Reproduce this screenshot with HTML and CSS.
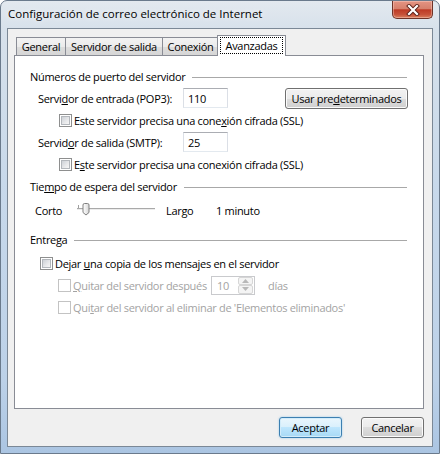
FILE: index.html
```html
<!DOCTYPE html>
<html lang="es">
<head>
<meta charset="utf-8">
<title>Configuración de correo electrónico de Internet</title>
<link rel="stylesheet" href="styles.css">
</head>
<body>
<div class="window">
  <div class="titlebar">
    <span class="title">Configuración de correo electrónico de Internet</span>
    <div class="close">
      <svg width="18" height="12" viewBox="0 0 18 12">
        <path d="M5 2 L13 10 M13 2 L5 10" stroke="#5a1f18" stroke-width="4" stroke-linecap="square"/>
        <path d="M5 2 L13 10 M13 2 L5 10" stroke="#ffffff" stroke-width="2.2" stroke-linecap="square"/>
      </svg>
    </div>
  </div>
  <div class="client">
    <div class="tabs">
      <div class="tab t1">General</div>
      <div class="tab t2">Servidor de salida</div>
      <div class="tab t3">Conexión</div>
      <div class="tab active"><span class="focus">Avanzadas</span></div>
    </div>
    <div class="panel">
      <div class="group-head"><span>Números de puerto del servidor</span><i class="rule"></i></div>
      <div class="row field-row">
        <span class="field-label">Servi<u>d</u>or de entrada (POP3):</span>
        <span class="textbox">110</span>
        <span class="btn wide">Usar pre<u>d</u>eterminados</span>
      </div>
      <div class="row check-row ssl">
        <span class="cb"></span><span>Este servidor precisa una cone<u>x</u>ión cifrada (SSL)</span>
      </div>
      <div class="row field-row">
        <span class="field-label">Servid<u>o</u>r de salida (SMTP):</span>
        <span class="textbox">25</span>
      </div>
      <div class="row check-row ssl">
        <span class="cb"></span><span>E<u>s</u>te servidor precisa una conexión cifrada (SSL)</span>
      </div>

      <div class="group-head g2"><span>Tie<u>m</u>po de espera del servidor</span><i class="rule"></i></div>
      <div class="row slider-row">
        <span class="s-short">Corto</span>
        <svg class="slider" width="80" height="22" viewBox="0 0 80 22">
          <defs>
            <linearGradient id="th" x1="0" y1="0" x2="1" y2="0">
              <stop offset="0" stop-color="#ffffff"/>
              <stop offset="1" stop-color="#d6d6d6"/>
            </linearGradient>
          </defs>
          <rect x="0" y="9" width="78" height="1" fill="#a9a9a9"/>
          <rect x="0" y="10" width="78" height="1" fill="#ececec"/>
          <rect x="1" y="6" width="1" height="3" fill="#a0a0a0"/>
          <path d="M7.5 4.5 h3 q1.5 0 1.5 1.5 v7.5 l-3 2.5 l-3 -2.5 v-7.5 q0 -1.5 1.5 -1.5 z" fill="url(#th)" stroke="#7f7f7f" stroke-width="1"/>
        </svg>
        <span class="s-long">Largo</span>
        <span class="s-val">1 minuto</span>
      </div>

      <div class="group-head g3"><span>Entrega</span><i class="rule"></i></div>
      <div class="row check-row keep">
        <span class="cb"></span><span>Dejar <u>u</u>na copia de los mensajes en el servidor</span>
      </div>
      <div class="row check-row sub disabled">
        <span class="cb"></span><span class="sub-label"><u>Q</u>uitar del servidor después</span>
        <span class="spin">
          <span class="spin-val">10</span>
          <span class="spin-btns">
            <span class="spin-b"><svg width="7" height="4" viewBox="0 0 7 4"><path d="M3.5 0 L7 4 L0 4 Z" fill="#b8b8b8"/></svg></span>
            <span class="spin-b"><svg width="7" height="4" viewBox="0 0 7 4"><path d="M0 0 L7 0 L3.5 4 Z" fill="#b8b8b8"/></svg></span>
          </span>
        </span>
        <span class="days">días</span>
      </div>
      <div class="row check-row sub disabled">
        <span class="cb"></span><span>Qui<u>t</u>ar del servidor al eliminar de 'Elementos eliminados'</span>
      </div>
    </div>
    <div class="buttons">
      <span class="btn default">Aceptar</span>
      <span class="btn">Cancelar</span>
    </div>
  </div>
</div>
</body>
</html>
```
FILE: styles.css
```css
html, body {
  margin: 0;
  padding: 0;
}
body {
  width: 440px;
  height: 454px;
  overflow: hidden;
  font-family: "Open Sans", "Liberation Sans", sans-serif;
  font-size: 11px;
  letter-spacing: -0.3px;
  color: #000;
  background: #ffffff;
  white-space: nowrap;
}
u {
  text-decoration: underline;
  text-underline-offset: 1px;
}
.window {
  width: 440px;
  height: 454px;
  box-sizing: border-box;
  border: 1px solid #6a7a8c;
  border-radius: 7px 7px 0 0;
  background: linear-gradient(180deg, #e3e9ef 0px, #d7e1eb 28px, #c8d9eb 180px, #bcd1e8 380px, #abc5e2 100%);
  padding: 0 6px 6px 6px;
  display: flex;
  flex-direction: column;
}
.titlebar {
  height: 27px;
  display: flex;
  align-items: flex-start;
  flex: none;
}
.title {
  margin-top: 5px;
  padding-left: 1px;
  line-height: 16px;
  font-size: 11.5px;
  letter-spacing: 0;
  text-shadow: 0 0 6px rgba(255,255,255,0.9);
}
.close {
  margin-left: auto;
  width: 41px;
  height: 18px;
  box-sizing: border-box;
  border: 1px solid #6e3328;
  border-top: none;
  border-radius: 0 0 5px 5px;
  background: linear-gradient(180deg, #e49483 0%, #d6806c 45%, #bd3a25 52%, #c7533a 80%, #d9805f 100%);
  box-shadow: inset 0 0 0 1px rgba(255,220,210,0.4);
  display: flex;
  align-items: center;
  justify-content: center;
}
.client {
  flex: 1;
  border: 1px solid #7b8896;
  background: #f0f0f0;
  padding: 6px 8px 0 6px;
  display: flex;
  flex-direction: column;
}
.tabs {
  height: 20px;
  display: flex;
  align-items: flex-end;
  padding-left: 2px;
  flex: none;
}
.tab {
  height: 18px;
  box-sizing: border-box;
  border: 1px solid #898c95;
  border-bottom: none;
  background: linear-gradient(180deg, #f3f3f3 0%, #ebebeb 50%, #dddddd 51%, #d6d6d6 100%);
  display: flex;
  align-items: center;
  justify-content: center;
  line-height: 14px;
  padding-top: 1px;
  position: relative;
}
.t1 { width: 50px; }
.t2 { width: 98px; margin-left: -1px; }
.t3 { width: 57px; margin-left: -1px; }
.tab.active {
  width: 69px;
  height: 21px;
  margin-left: -2px;
  margin-bottom: -1px;
  background: #ffffff;
  z-index: 2;
  align-items: flex-start;
  padding-top: 1px;
}
.focus {
  border: 1px dotted #000;
  padding: 0 5px;
  line-height: 15px;
}
.panel {
  height: 354px;
  box-sizing: border-box;
  flex: none;
  background: #ffffff;
  border: 1px solid #898c95;
  padding-top: 13px;
}
.group-head {
  height: 16px;
  display: flex;
  align-items: center;
  padding-left: 15px;
  padding-right: 16px;
  line-height: 16px;
}
.group-head .rule {
  flex: 1;
  height: 1px;
  background: #a8a8a8;
  margin-left: 7px;
}
.g2 { margin-top: 4px; }
.g3 { margin-top: 11px; }
.row {
  height: 22px;
  display: flex;
  align-items: center;
}
.field-row {
  padding-left: 23px;
  padding-right: 15px;
}
.group-head + .field-row { margin-top: 2px; }
.field-label {
  width: 145px;
  flex: none;
}
.textbox {
  width: 45px;
  height: 20px;
  box-sizing: border-box;
  border: 1px solid #abadb3;
  border-left-color: #dbdfe6;
  border-right-color: #dbdfe6;
  border-bottom-color: #e3e9ef;
  background: #fff;
  padding-left: 4px;
  display: flex;
  align-items: center;
}
.btn {
  height: 21px;
  box-sizing: border-box;
  border: 1px solid #707070;
  border-radius: 3px;
  background: linear-gradient(180deg, #f2f2f2 0%, #ebebeb 50%, #dddddd 50%, #cfcfcf 100%);
  box-shadow: inset 0 0 0 1px #fbfbfb;
  display: flex;
  align-items: center;
  justify-content: center;
  width: 63px;
}
.btn.wide {
  margin-left: auto;
  width: 123px;
}
.btn.default {
  border-color: #3c7fb1;
  background: linear-gradient(180deg, #eaf6fd 0%, #d9f0fc 50%, #bee6fd 50%, #a7d9f5 100%);
  box-shadow: inset 0 0 0 1px #d2ecfa, 0 0 2px rgba(80,170,230,0.6);
}
.cb {
  width: 13px;
  height: 13px;
  box-sizing: border-box;
  border: 1px solid #8e8f8f;
  background: #fff;
  flex: none;
  margin-right: 2px;
  display: flex;
  align-items: center;
  justify-content: center;
}
.cb::after {
  content: "";
  width: 9px;
  height: 9px;
  box-sizing: border-box;
  border: 1px solid #b3b7bc;
  background: linear-gradient(135deg, #cdd1d6 0%, #e8e9eb 60%, #f6f6f6 100%);
}
.ssl { padding-left: 44px; }
.keep { padding-left: 25px; margin-top: 4px; }
.sub { padding-left: 43px; }
.disabled { color: #a3a3a3; }
.disabled .cb { border-color: #c3c3c3; }
.disabled .cb::after { border-color: #ffffff; background: #ffffff; }
.sub-label {
  width: 138px;
  flex: none;
}
.spin {
  width: 44px;
  height: 19px;
  box-sizing: border-box;
  border: 1px solid #c9cacd;
  background: #fff;
  display: flex;
  align-items: center;
  padding-left: 5px;
}
.spin-val { flex: 1; }
.spin-btns {
  width: 15px;
  height: 17px;
  display: flex;
  flex-direction: column;
  margin-right: 1px;
}
.spin-b {
  flex: 1;
  box-sizing: border-box;
  border: 1px solid #d6d6d6;
  border-radius: 2px;
  background: #f4f4f4;
  display: flex;
  align-items: center;
  justify-content: center;
}
.days { margin-left: 13px; }
.slider-row { padding-left: 20px; margin-top: 4px; }
.s-short { width: 42px; flex: none; }
.slider { flex: none; }
.s-long { margin-left: 9px; width: 50px; flex: none; }
.buttons {
  margin-top: 8px;
  display: flex;
  justify-content: flex-end;
  gap: 19px;
  flex: none;
}
.buttons .btn { height: 21px; }
```
